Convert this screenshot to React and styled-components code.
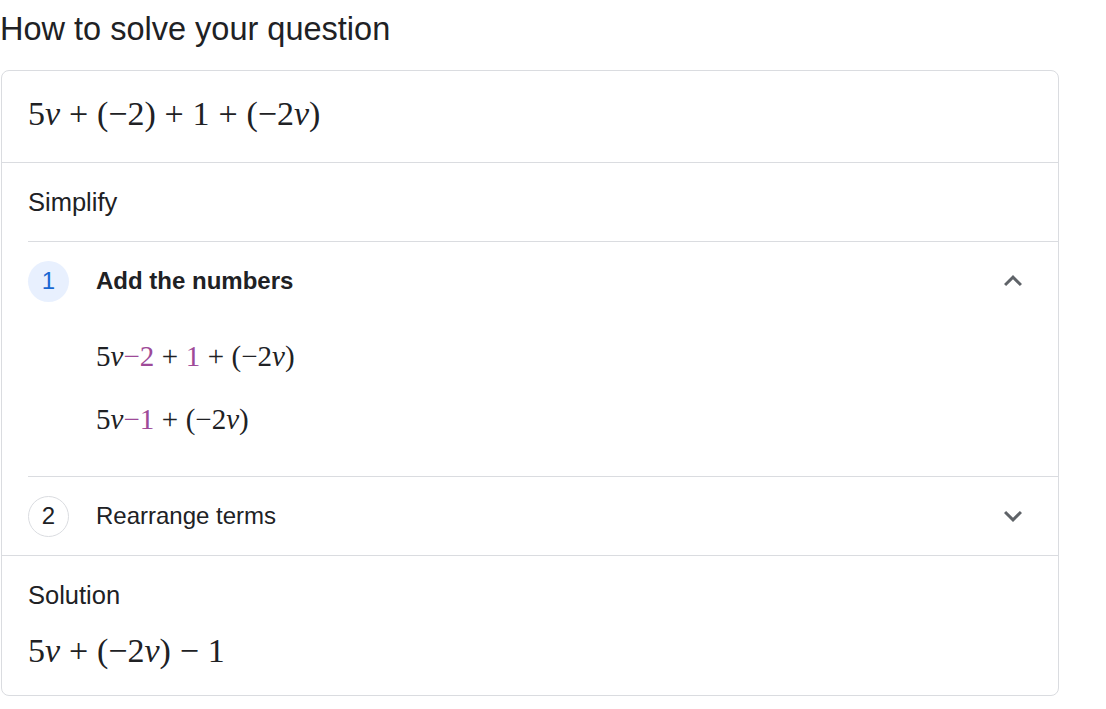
import styled, { createGlobalStyle } from "styled-components";

const GlobalStyle = createGlobalStyle`
    body {
        margin: 0;
        background: #ffffff;
        font-family: "Liberation Sans", Arial, sans-serif;
        color: #202124;
    }
`

const steps = [
    {
        n: 1,
        title: "Add the numbers",
        open: true,
        lines: [
            [{ t: "5" }, { t: "v", i: true }, { t: "−2", hl: true }, { op: "+" }, { t: "1", hl: true }, { op: "+" }, { t: "(−2" }, { t: "v", i: true }, { t: ")" }],
            [{ t: "5" }, { t: "v", i: true }, { t: "−1", hl: true }, { op: "+" }, { t: "(−2" }, { t: "v", i: true }, { t: ")" }],
        ],
    },
    { n: 2, title: "Rearrange terms", open: false, lines: [] },
];

const question = [{ t: "5" }, { t: "v", i: true }, { op: "+" }, { t: "(−2)" }, { op: "+" }, { t: "1" }, { op: "+" }, { t: "(−2" }, { t: "v", i: true }, { t: ")" }];
const solution = [{ t: "5" }, { t: "v", i: true }, { op: "+" }, { t: "(−2" }, { t: "v", i: true }, { t: ")" }, { op: "−" }, { t: "1" }];

function MathExpr({ parts }) {
    return parts.map((p, k) => {
        if (p.op) return <Op key={k}>{p.op}</Op>;
        if (p.i) return <Var key={k}>{p.t}</Var>;
        return <Tok key={k} $hl={p.hl}>{p.t}</Tok>;
    });
}

function Chevron({ up }) {
    return (
        <ChevronIcon viewBox="0 0 24 24" width="36" height="36">
            {up
                ? <path d="M7.41 15.41 12 10.83l4.59 4.58L18 14l-6-6-6 6z" />
                : <path d="M7.41 8.59 12 13.17l4.59-4.58L18 10l-6 6-6-6z" />}
        </ChevronIcon>
    );
}

export default function App () {
    return(
        <Page>
            <GlobalStyle />
            <Title>How to solve your question</Title>
            <Card>
                <QuestionRow>
                    <BigMath><MathExpr parts={question} /></BigMath>
                </QuestionRow>
                <Section>
                    <SectionLabel>Simplify</SectionLabel>
                    <StepList>
                        {steps.map(s => (
                            <Step key={s.n}>
                                <StepHeader>
                                    <StepNumber $active={s.open}>{s.n}</StepNumber>
                                    <StepTitle $active={s.open}>{s.title}</StepTitle>
                                    <Chevron up={s.open} />
                                </StepHeader>
                                {s.open && (
                                    <StepBody>
                                        {s.lines.map((l, k) => (
                                            <StepMath key={k}><MathExpr parts={l} /></StepMath>
                                        ))}
                                    </StepBody>
                                )}
                            </Step>
                        ))}
                    </StepList>
                </Section>
                <SolutionSection>
                    <SolutionLabel>Solution</SolutionLabel>
                    <BigMath><MathExpr parts={solution} /></BigMath>
                </SolutionSection>
            </Card>
        </Page>
    )
}

const Page = styled.div`
    padding: 9px 0 0 0;
    width: 1106px;
`
const Title = styled.h1`
    margin: 0 0 21px 0;
    font-size: 32.5px;
    line-height: 40px;
    font-weight: 400;
    color: #202124;
`
const Card = styled.div`
    margin-left: 1px;
    width: 1056px;
    border: 1px solid #dadce0;
    border-radius: 8px;
    overflow: hidden;
`
const BigMath = styled.div`
    font-family: "Liberation Serif", "Times New Roman", serif;
    font-size: 34px;
    line-height: 44px;
    color: #202124;
    white-space: nowrap;
`
const StepMath = styled(BigMath)`
    font-size: 29px;
    line-height: 40px;
    & + & {
        margin-top: 23px;
    }
`
const Tok = styled.span`
    color: ${p => p.$hl ? "#9e4a98" : "inherit"};
`
const Var = styled.span`
    font-style: italic;
`
const Op = styled.span`
    margin: 0 0.26em;
`
const QuestionRow = styled.div`
    padding: 21px 26px 26px;
    border-bottom: 1px solid #dadce0;
`
const Section = styled.div`
    border-bottom: 1px solid #dadce0;
`
const SectionLabel = styled.div`
    padding: 24px 26px;
    font-size: 25.5px;
    line-height: 30px;
`
const StepList = styled.div`
    margin-left: 26px;
`
const Step = styled.div`
    border-top: 1px solid #dadce0;
`
const StepHeader = styled.div`
    display: flex;
    align-items: center;
    height: 78px;
    padding-right: 27px;
    cursor: pointer;
`
const StepNumber = styled.div`
    box-sizing: border-box;
    width: 41px;
    height: 41px;
    border-radius: 50%;
    display: flex;
    align-items: center;
    justify-content: center;
    font-size: 24px;
    background: ${p => p.$active ? "#e8f0fe" : "#ffffff"};
    color: ${p => p.$active ? "#1967d2" : "#202124"};
    border: ${p => p.$active ? "none" : "1.5px solid #dadce0"};
    flex-shrink: 0;
`
const StepTitle = styled.div`
    flex: 1;
    margin-left: 27px;
    font-size: 24px;
    font-weight: ${p => p.$active ? 700 : 400};
`
const ChevronIcon = styled.svg`
    fill: #5f6368;
    flex-shrink: 0;
`
const StepBody = styled.div`
    padding: 16px 0 37px 68px;
`
const SolutionSection = styled.div`
    padding: 24px 26px 22px;
`
const SolutionLabel = styled.div`
    font-size: 25.5px;
    line-height: 30px;
    margin-bottom: 19px;
`
